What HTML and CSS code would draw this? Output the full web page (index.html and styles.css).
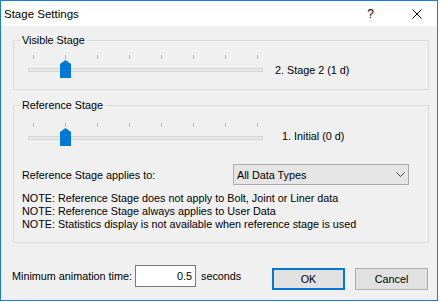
FILE: index.html
```html
<!DOCTYPE html>
<html>
<head>
<meta charset="utf-8">
<link rel="stylesheet" href="styles.css">
</head>
<body>
<div class="window">
  <div class="titlebar">
    <span class="title">Stage Settings</span>
    <span class="help">?</span>
    <svg class="close" width="10" height="10" viewBox="0 0 10 10"><path d="M0.5 0.5 L9.5 9.5 M9.5 0.5 L0.5 9.5" stroke="#000" stroke-width="1" fill="none"/></svg>
  </div>
  <div class="body">
    <fieldset class="group g1">
      <legend>Visible Stage</legend>
      <div class="slider-row">
        <div class="slider">
          <div class="ticks"><i></i><i></i><i></i><i></i><i></i><i></i><i></i><i></i></div>
          <div class="track"></div>
          <svg class="thumb" width="11" height="18" viewBox="0 0 11 18"><polygon points="0,4 5.5,0 11,4 11,18 0,18" fill="#0078d7"/></svg>
        </div>
        <span class="value">2. Stage 2 (1 d)</span>
      </div>
    </fieldset>
    <fieldset class="group g2">
      <legend>Reference Stage</legend>
      <div class="slider-row">
        <div class="slider">
          <div class="ticks"><i></i><i></i><i></i><i></i><i></i><i></i><i></i><i></i></div>
          <div class="track"></div>
          <svg class="thumb" width="11" height="18" viewBox="0 0 11 18"><polygon points="0,4 5.5,0 11,4 11,18 0,18" fill="#0078d7"/></svg>
        </div>
        <span class="value">1. Initial (0 d)</span>
      </div>
      <div class="applies">
        <span class="applies-label">Reference Stage applies to:</span>
        <div class="select">
          <span>All Data Types</span>
          <svg width="9" height="5" viewBox="0 0 9 5"><polyline points="0.5,0.5 4.5,4.5 8.5,0.5" stroke="#404040" stroke-width="1" fill="none"/></svg>
        </div>
      </div>
      <div class="notes">
        <div>NOTE: Reference Stage does not apply to Bolt, Joint or Liner data</div>
        <div>NOTE: Reference Stage always applies to User Data</div>
        <div>NOTE: Statistics display is not available when reference stage is used</div>
      </div>
    </fieldset>
    <div class="footer">
      <span class="min-label">Minimum animation time:</span>
      <div class="input">0.5</div>
      <span class="seconds">seconds</span>
      <div class="btn ok">OK</div>
      <div class="btn">Cancel</div>
    </div>
  </div>
</div>
</body>
</html>
```
FILE: styles.css
```css
* { box-sizing: border-box; }
body {
  margin: 0;
  background: #ffffff;
  font-family: "Liberation Sans", Arial, sans-serif;
  font-size: 10.8px;
  color: #000;
}
.window {
  width: 438px;
  height: 301px;
  border: 1px solid #1c7cd5;
  display: flex;
  flex-direction: column;
  background: #f0f0f0;
}
.titlebar {
  height: 25px;
  flex: none;
  background: #fff;
  display: flex;
  align-items: center;
}
.title {
  font-size: 11.5px;
  margin-left: 3px;
}
.help {
  margin-left: auto;
  font-size: 12px;
}
.close {
  margin-left: 38px;
  margin-right: 15px;
}
.body {
  flex: 1;
  padding-left: 12px;
}
.group {
  margin: 7px 0 0 0;
  padding: 0;
  width: 416px;
  min-width: 0;
  border: 1px solid #dcdcdc;
}
.group legend {
  margin-left: 6px;
  padding: 0 2px;
  line-height: 14px;
}
.g2 { margin-top: 8px; }
.slider-row {
  display: flex;
  align-items: flex-start;
  margin-left: 14px;
}
.g1 .slider-row { margin-top: 7px; margin-bottom: 10px; }
.g2 .slider-row { margin-top: 10px; }
.slider {
  position: relative;
  flex: none;
  width: 235px;
  height: 25px;
}
.ticks {
  display: flex;
  justify-content: space-between;
  padding: 1px 5px 0 5px;
  height: 5px;
}
.ticks i {
  display: block;
  width: 1px;
  height: 4px;
  background: #b4b4b4;
}
.track {
  margin-top: 9px;
  height: 4px;
  background: #e7e7e7;
  border: 1px solid #d6d6d6;
}
.thumb {
  position: absolute;
  left: 32px;
  top: 6px;
}
.value { line-height: 13px; }
.g1 .value { margin-left: 12px; margin-top: 10px; }
.g2 .value { margin-left: 19px; margin-top: 8px; }
.applies {
  display: flex;
  align-items: center;
  margin-top: 17px;
  padding-left: 8px;
}
.applies-label { width: 211px; flex: none; }
.select {
  flex: none;
  width: 176px;
  height: 21px;
  border: 1px solid #adadad;
  background: #e5e5e5;
  display: flex;
  align-items: center;
  justify-content: space-between;
  padding: 0 3px 0 3px;
}
.notes {
  margin-top: 7px;
  margin-bottom: 11px;
  padding-left: 8px;
  line-height: 13px;
}
.footer {
  display: flex;
  align-items: flex-start;
  margin-top: 22px;
  margin-left: -1px;
}
.min-label {
  flex: none;
  width: 123px;
  line-height: 13px;
  margin-top: 5px;
  white-space: nowrap;
}
.input {
  flex: none;
  width: 61px;
  height: 22px;
  background: #fff;
  border: 1px solid #7a7a7a;
  text-align: right;
  padding-right: 3px;
  line-height: 20px;
}
.seconds {
  flex: none;
  width: 76px;
  padding-left: 5px;
  line-height: 13px;
  margin-top: 5px;
}
.btn {
  flex: none;
  width: 73px;
  height: 22px;
  margin-top: 3px;
  margin-right: 10px;
  background: #e1e1e1;
  border: 1px solid #adadad;
  display: flex;
  align-items: center;
  justify-content: center;
}
.btn.ok { border: 2px solid #0078d7; }
```
